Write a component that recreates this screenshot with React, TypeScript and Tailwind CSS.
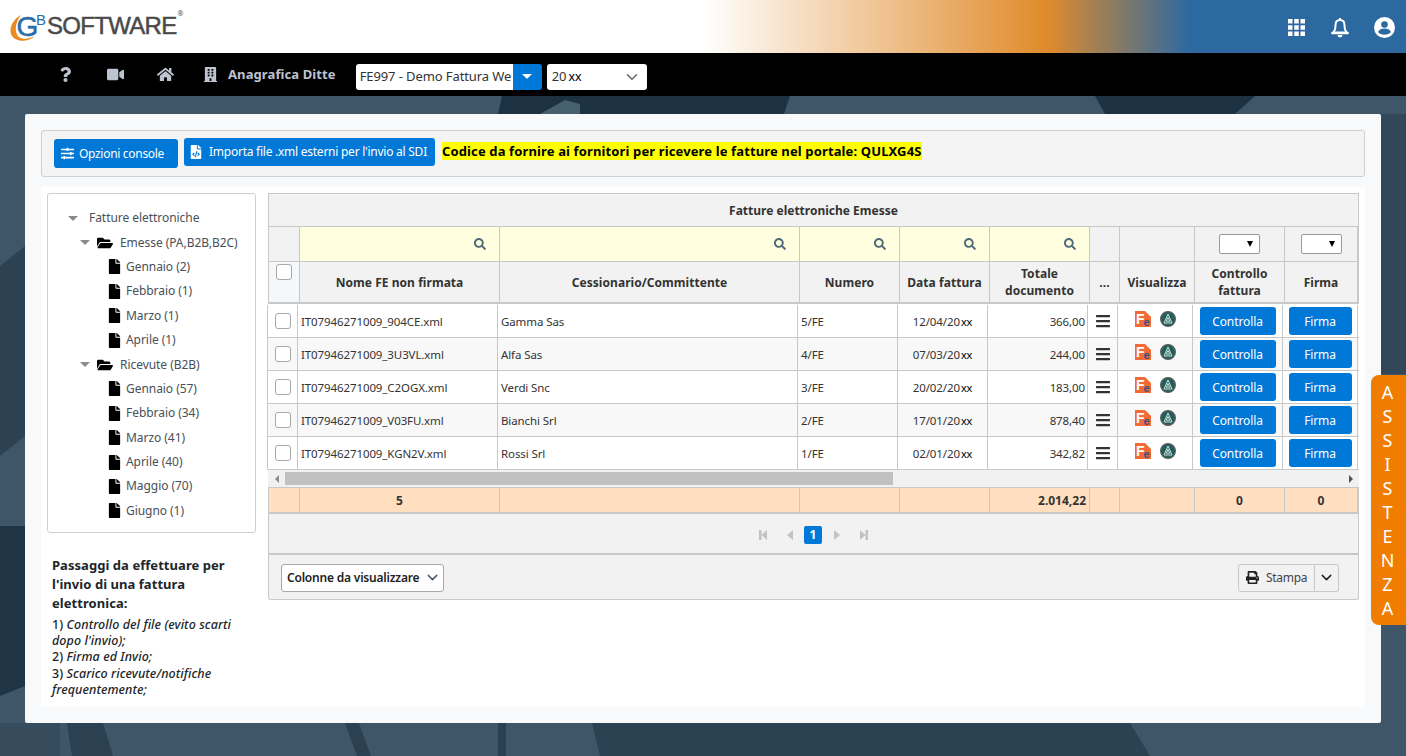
import { ChevronDown } from "lucide-react";
import { FaBars, FaBuilding, FaFile, FaFileCode, FaFolderOpen, FaHome, FaPrint, FaQuestion, FaSearch, FaSlidersH, FaVideo } from "react-icons/fa";

const font = "font-['Noto_Sans','Open_Sans',sans-serif]";
const border = "border-[#c8c8c8]";

const headColumns = "grid-cols-[31px_200px_300px_100px_90px_100px_30px_75px_90px_73px]";
const bodyColumns = "grid-cols-[31px_200px_300px_100px_90px_100px_30px_75px_90px_75px]";

const rows = [
  ["IT07946271009_904CE.xml", "Gamma Sas", "5/FE", "12/04/20", "366,00"],
  ["IT07946271009_3U3VL.xml", "Alfa Sas", "4/FE", "07/03/20", "244,00"],
  ["IT07946271009_C2OGX.xml", "Verdi Snc", "3/FE", "20/02/20", "183,00"],
  ["IT07946271009_V03FU.xml", "Bianchi Srl", "2/FE", "17/01/20", "878,40"],
  ["IT07946271009_KGN2V.xml", "Rossi Srl", "1/FE", "02/01/20", "342,82"],
];

const emesse = ["Gennaio (2)", "Febbraio (1)", "Marzo (1)", "Aprile (1)"];
const ricevute = ["Gennaio (57)", "Febbraio (34)", "Marzo (41)", "Aprile (40)", "Maggio (70)", "Giugno (1)"];

function Caret() {
  return <span className="w-0 h-0 border-l-[5px] border-r-[5px] border-t-[5px] border-l-transparent border-r-transparent border-t-[#8a8a8a]" />;
}

function TreeLeaf({ label }: { label: string }) {
  return (
    <div className="h-[24.4px] flex items-center gap-[4px] pl-[59px]">
      <FaFile size={15} className="text-black shrink-0" />
      <span>{label}</span>
    </div>
  );
}

function TreeFolder({ label }: { label: string }) {
  return (
    <div className="h-[24.4px] flex items-center pl-[32px]">
      <Caret />
      <FaFolderOpen size={16} className="ml-[7px] text-black shrink-0" />
      <span className="ml-[7px]">{label}</span>
    </div>
  );
}

function FeIcon() {
  return (
    <svg width="16" height="16" viewBox="0 0 16 16">
      <path d="M0 0h10l6 6v10H0z" fill="#f26a35" />
      <text x="1" y="13" fontSize="14" fontWeight="700" fontFamily="Liberation Sans, sans-serif" fill="#fff">F</text>
      <text x="8.5" y="14.5" fontSize="11" fontWeight="700" fontFamily="Liberation Sans, sans-serif" fill="#34508f">e</text>
    </svg>
  );
}

function SealIcon() {
  return (
    <svg width="16" height="16" viewBox="0 0 16 16">
      <circle cx="8" cy="8" r="7.4" fill="#1f5f5b" stroke="#5f5f5f" strokeWidth="1.2" />
      <path d="M8 3 12 12H4z M8 6.500l-1.800 3.700h3.600z" fill="none" stroke="#cfdedb" strokeWidth="1" />
    </svg>
  );
}

function Check() {
  return <span className="block w-4 h-4 rounded-[3px] border border-[#a8a8a8] bg-white" />;
}

function NativeSelect() {
  return (
    <span className="w-[41px] h-[20px] bg-white border border-[#9a9a9a] rounded-[2px] flex items-center justify-end pr-[6px]">
      <span className="w-0 h-0 border-l-[3.5px] border-r-[3.5px] border-t-[6px] border-l-transparent border-r-transparent border-t-black" />
    </span>
  );
}

function BlueButton({ label, width }: { label: string; width: string }) {
  return (
    <button className={`${width} h-[28px] bg-[#0078d7] rounded-[3px] text-white text-[12px] tracking-[-0.1px] flex items-center justify-center`}>
      <span className="pt-[2px]">{label}</span>
    </button>
  );
}

function Pagination() {
  return (
    <div className="h-[41px] pt-[2px] bg-[#f2f2f2] border-x border-b-[2px] border-[#c8c8c8] flex items-center pl-[489px] text-[#c2c2c2]">
      <svg width="10" height="10" viewBox="0 0 10 10"><path d="M1 0h2.500v10H1z M9 0v10L3.500 5z" fill="currentColor" /></svg>
      <svg width="8" height="10" viewBox="0 0 8 10" className="ml-[18px]"><path d="M7 0v10L1 5z" fill="currentColor" /></svg>
      <span className="ml-[10px] w-[18px] h-[18px] bg-[#0078d7] rounded-[2px] text-white text-[12px] font-bold flex items-center justify-center">1</span>
      <svg width="8" height="10" viewBox="0 0 8 10" className="ml-[11px]"><path d="M1 0v10l6-5z" fill="currentColor" /></svg>
      <svg width="10" height="10" viewBox="0 0 10 10" className="ml-[18px]"><path d="M1 0v10l5.500-5z M6.500 0H9v10H6.500z" fill="currentColor" /></svg>
    </div>
  );
}

export default function App() {
  return (
    <div className={`${font} relative w-[1406px] h-[756px] overflow-hidden bg-[#3f5668] text-[#212529]`}>
      {/* top header */}
      <div className="h-[53px] flex items-center justify-between bg-[linear-gradient(90deg,#fff_0%,#fff_50%,#e08b2b_74.5%,#2d69a1_84.6%,#2d69a1_100%)]">
        <div className="flex items-center pl-[10px] h-full">
          <svg width="37" height="32" viewBox="0 0 37 32" className="mt-[2px]">
            <path d="M11 3C3 7-1 16 1 22c2 6 10 8 17 6 3-1 5-2 7-4-6 3-12 4-16 1C4 21 5 10 11 3z" fill="#ea8a21" />
            <text x="6.5" y="23.5" fontSize="28" stroke="#2b6ca8" strokeWidth="0.5" fontFamily="Liberation Sans, sans-serif" fill="#2b6ca8">G</text>
            <text x="26" y="12.5" fontSize="15" fontFamily="Liberation Sans, sans-serif" fill="#2b6ca8">B</text>
          </svg>
          <span className="text-[24px] font-['Liberation_Sans',sans-serif] text-[#4a4a4a] [-webkit-text-stroke:0.5px_#4a4a4a] tracking-[-0.7px] leading-none -mt-[2px]">SOFTWARE</span>
          <span className="text-[7px] text-[#4a4a4a] self-start mt-[9px] ml-[1px]">®</span>
        </div>
        <div className="flex items-center pr-[11px] text-white">
          <svg width="17" height="17" viewBox="0 0 17 17" fill="#fff" className="mt-[2px]">
            <path d="M0 0h4.500v4.500H0z M6.250 0h4.500v4.500h-4.500z M12.500 0H17v4.500h-4.500z M0 6.250h4.500v4.500H0z M6.250 6.250h4.500v4.500h-4.500z M12.500 6.250H17v4.500h-4.500z M0 12.500h4.500V17H0z M6.250 12.500h4.500V17h-4.500z M12.500 12.500H17V17h-4.500z" />
          </svg>
          <svg width="18" height="20" viewBox="0 0 18 20" className="ml-[26px] mt-[2px]">
            <path d="M9 2c-3 0-4.500 2.300-4.500 5.300 0 4-1 6-2.500 7.200h14c-1.500-1.200-2.500-3.200-2.500-7.200C13.500 4.300 12 2 9 2z" fill="none" stroke="#fff" strokeWidth="2" />
            <path d="M6.500 17h5a2.500 2.500 0 0 1-5 0z M8 0h2v2.500H8z M0.500 14.500h17v1.800h-17z" fill="#fff" />
          </svg>
          <svg width="21" height="21" viewBox="0 0 21 21" className="ml-[25px] mt-[2px]">
            <circle cx="10.5" cy="10.5" r="10.5" fill="#fff" />
            <circle cx="10.5" cy="7.5" r="3.3" fill="#2d69a1" />
            <path d="M4 15c1-2.500 3.500-3.500 6.500-3.500S16 12.500 17 15c-1.500 1.800-4 2.800-6.500 2.800S5.500 16.800 4 15z" fill="#2d69a1" />
          </svg>
        </div>
      </div>

      {/* black nav */}
      <div className="h-[43px] bg-black flex items-center text-[#bdc3d1]">
        <FaQuestion size={15} className="ml-[58px]" />
        <FaVideo size={17} className="ml-[34px]" />
        <FaHome size={17} className="ml-[33px]" />
        <FaBuilding size={15} className="ml-[29px]" />
        <span className="ml-[10px] text-[13px] font-bold tracking-[0.1px]">Anagrafica Ditte</span>
        <div className="ml-[20px] mt-[4px] w-[186px] h-[26px] flex">
          <span className="w-[157px] bg-white rounded-l-[3px] text-[13px] text-[#333] tracking-[-0.1px] flex items-center pl-[4px] whitespace-nowrap overflow-hidden">FE997 - Demo Fattura We</span>
          <span className="w-[29px] bg-[#0078d7] rounded-r-[3px] flex items-center justify-center">
            <span className="w-0 h-0 border-l-[5px] border-r-[5px] border-t-[5px] border-l-transparent border-r-transparent border-t-white" />
          </span>
        </div>
        <div className="ml-[5px] mt-[4px] w-[100px] h-[26px] bg-white rounded-[3px] text-[13px] text-[#333] flex items-center justify-between pl-[5px] pr-[6px]">
          <span>20<span className="ml-[2px] text-black font-['Liberation_Sans',sans-serif]">xx</span></span>
          <ChevronDown size={18} className="text-[#666]" />
        </div>
      </div>

      {/* photo backdrop */}
      <svg className="absolute left-0 top-[96px]" width="1406" height="660" viewBox="0 0 1406 660">
        <path d="M502 0h288l-6 18H498z M1095 0h160l-20 18h-130z" fill="#1c3242" />
        <path d="M540 18l25-14 15 4v10z" fill="#46606f" />
        <path d="M0 170L25 150V340L0 360z" fill="#2c4252" />
        <path d="M0 430h25v160L0 600z" fill="#1f3545" />
        <path d="M1381 18h25v260h-25z" fill="#324859" />
        <path d="M592 627h538l20 33H600z" fill="#2a4252" />
        <path d="M67 627h36l10 33H72z M345 627h14l12 33h-14z M498 627h8v33h-8z" fill="#2b4050" />
        <path d="M0 627h60v33H0z" fill="#364c5d" />
      </svg>

      {/* main card */}
      <div className="absolute left-[25px] top-[114px] w-[1356px] h-[609px] bg-[#f8f9fa] rounded-[2px] p-[16px]">
        <div className="h-[47px] bg-[#f4f4f4] border border-[#cfcfcf] rounded-[3px] flex items-center pl-[12px] text-white text-[12px]">
          <button className="w-[124px] h-[29px] bg-[#0078d7] rounded-[3px] flex items-center pl-[7px] gap-[5px]">
            <FaSlidersH size={13} />
            <span className="tracking-[-0.3px] whitespace-nowrap">Opzioni console</span>
          </button>
          <button className="ml-[6px] -mt-[3px] w-[251px] h-[28px] bg-[#0078d7] rounded-[3px] flex items-center pl-[5px]">
            <FaFileCode size={14} className="shrink-0" />
            <span className="ml-[6px] tracking-[-0.25px] whitespace-nowrap">Importa file .xml esterni per l'invio al SDI</span>
          </button>
          <span className="ml-[7px] -mt-[5px] bg-[#ffff00] text-black text-[13px] font-bold tracking-[0.13px] leading-[18px] whitespace-nowrap">
            Codice da fornire ai fornitori per ricevere le fatture nel portale: QULXG4S
          </span>
        </div>

        <div className="mt-[10px] h-[520px] bg-white flex">
          {/* left column */}
          <div className="w-[227px] pl-[6px] shrink-0">
            <div className="w-[209px] h-[340px] mt-[6px] border border-[#cfcfcf] rounded-[3px] pt-[12px] text-[12px] text-[#495057] tracking-[-0.05px]">
              <div className="h-[24.4px] flex items-center pl-[20px]">
                <Caret />
                <span className="ml-[11px]">Fatture elettroniche</span>
              </div>
              <TreeFolder label="Emesse (PA,B2B,B2C)" />
              {emesse.map((m) => <TreeLeaf key={m} label={m} />)}
              <TreeFolder label="Ricevute (B2B)" />
              {ricevute.map((m) => <TreeLeaf key={m} label={m} />)}
            </div>
            <div className="mt-[23px] pl-[5px] pr-[20px]">
              <p className="text-[13px] font-bold leading-[19px] text-[#212529] tracking-[0.05px]">
                Passaggi da effettuare per l'invio di una fattura elettronica:
              </p>
              <div className="mt-[4px] text-[12.5px] font-medium leading-[16.2px] text-[#212529] whitespace-nowrap tracking-[0.08px]">
                <div>1) <em>Controllo del file (evito scarti</em></div>
                <div><em>dopo l'invio);</em></div>
                <div>2) <em>Firma ed Invio;</em></div>
                <div>3) <em>Scarico ricevute/notifiche</em></div>
                <div><em>frequentemente;</em></div>
              </div>
            </div>
          </div>

          {/* table */}
          <div className="w-[1091px] mt-[6px] text-[12px]">
            <div className={`h-[34px] pt-[1px] bg-[#f2f2f2] border ${border} flex items-center justify-center font-bold text-[12px] text-[#333]`}>
              Fatture elettroniche Emesse
            </div>
            <div className={`grid ${headColumns} border-x ${border} bg-[#f2f2f2]`}>
              {[0, 1, 2, 3, 4, 5, 6, 7, 8, 9].map((i) => (
                <div key={i} className={`h-[35px] border-b border-r ${border} flex items-center ${i >= 1 && i <= 5 ? "bg-[#ffffdf] justify-end pr-[13px]" : "justify-center"}`}>
                  {i >= 1 && i <= 5 && <FaSearch size={12} className="text-[#4f6a7a]" />}
                  {i >= 8 && <NativeSelect />}
                </div>
              ))}
            </div>
            <div className={`grid ${headColumns} border-x border-b-[2px] ${border} bg-[#f2f2f2] font-bold text-[#333] text-center leading-[17px] tracking-[0.05px]`}>
              <div className={`h-[40px] border-r ${border} pt-[2px] pl-[7px] bg-[#f4f8fa]`}><Check /></div>
              {["Nome FE non firmata", "Cessionario/Committente", "Numero", "Data fattura", "Totale documento", "...", "Visualizza", "Controllo fattura", "Firma"].map((h) => (
                <div key={h} className={`h-[40px] border-r ${border} flex items-center justify-center px-[2px]`}>{h}</div>
              ))}
            </div>
            <div className="h-[1px] bg-white" />
            {rows.map((r, idx) => (
              <div key={r[0]} className={`grid ${bodyColumns} -ml-px h-[33px] border-b ${border} ${idx % 2 ? "bg-[#f8f8f8]" : "bg-white"} text-[#333] text-[11.5px] tracking-[-0.1px]`}>
                <div className={`border-x ${border} flex items-center justify-center`}><Check /></div>
                <div className={`border-r ${border} flex items-center pl-[3px] pt-[2px] whitespace-nowrap`}>{r[0]}</div>
                <div className={`border-r ${border} flex items-center pl-[3px] pt-[2px]`}>{r[1]}</div>
                <div className={`border-r ${border} flex items-center pl-[3px] pt-[2px]`}>{r[2]}</div>
                <div className={`border-r ${border} flex items-center justify-center pt-[2px]`}>
                  <span>{r[3]}<span className="ml-[1px] text-black font-['Liberation_Sans',sans-serif]">xx</span></span>
                </div>
                <div className={`border-r ${border} flex items-center justify-end pr-[2px] pt-[2px]`}>{r[4]}</div>
                <div className={`border-r ${border} flex items-center justify-center text-[#333]`}><FaBars size={16} /></div>
                <div className={`border-r ${border} flex items-start pt-[6px] justify-center gap-[9px]`}><FeIcon /><SealIcon /></div>
                <div className={`border-r ${border} flex items-center justify-center`}><BlueButton label="Controlla" width="w-[76px]" /></div>
                <div className={`flex items-center justify-center border-r ${border}`}><BlueButton label="Firma" width="w-[63px]" /></div>
              </div>
            ))}
            {/* scrollbar */}
            <div className="h-[17px] bg-[#f1f1f1] flex items-center relative">
              <span className="ml-[7px] w-0 h-0 border-y-[4px] border-r-[4px] border-y-transparent border-r-[#8a8a8a]" />
              <span className="ml-[6px] w-[608px] h-[13px] bg-[#c1c1c1]" />
              <span className="absolute right-[6px] w-0 h-0 border-y-[4px] border-l-[4px] border-y-transparent border-l-[#505050]" />
            </div>
            {/* totals */}
            <div className={`grid ${headColumns} h-[27px] bg-[#ffdfc0] border ${border} border-b-[2px] font-bold text-[#333] text-center`}>
              {["", "5", "", "", "", "2.014,22", "", "", "0", "0"].map((t, i) => (
                <div key={i} className={`border-r ${border} flex items-center pt-[2px] ${i === 5 ? "justify-end pr-[3px]" : "justify-center"}`}>{t}</div>
              ))}
            </div>
            <Pagination />
            <div className={`h-[45px] pt-[1px] bg-[#f2f2f2] border-x border-b ${border} rounded-b-[3px] flex items-center justify-between pl-[12px] pr-[19px]`}>
              <button className="w-[163px] h-[28px] bg-white border border-[#a8a8a8] rounded-[3px] font-semibold text-[#222] tracking-[-0.2px] flex items-center pl-[5px] gap-[5px] whitespace-nowrap">
                Colonne da visualizzare
                <ChevronDown size={17} className="text-[#4a5a6a]" />
              </button>
              <div className="flex h-[28px] text-[#444]">
                <span className="w-[77px] bg-[#f2f2f2] border border-[#c8c8c8] rounded-l-[3px] flex items-center pl-[7px] gap-[7px] tracking-[-0.3px]">
                  <FaPrint size={13} className="text-[#222]" />Stampa
                </span>
                <span className="w-[24px] border-y border-r border-[#c8c8c8] rounded-r-[3px] flex items-center justify-center">
                  <ChevronDown size={17} className="text-[#222]" />
                </span>
              </div>
            </div>
          </div>
        </div>
      </div>

      {/* assistenza tab */}
      <div className="absolute left-[1371px] top-[375px] w-[35px] h-[250px] bg-[#f07d00] rounded-l-[8px] flex flex-col items-center pt-[5px] pr-[2px] text-white text-[18px] leading-[24px]">
        {"ASSISTENZA".split("").map((c, i) => <span key={i}>{c}</span>)}
      </div>
    </div>
  );
}
